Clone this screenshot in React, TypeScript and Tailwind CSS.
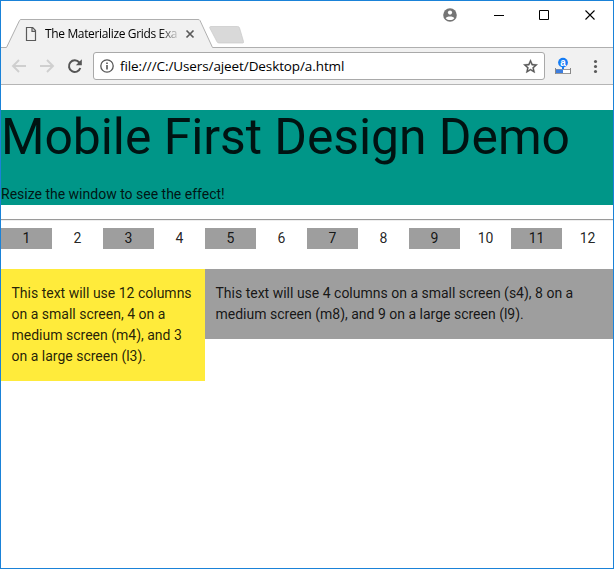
import React from "react";

const numbers = [1, 2, 3, 4, 5, 6, 7, 8, 9, 10, 11, 12];

function TabStrip() {
  return (
    <div className="relative flex h-[47px] items-start bg-white">
      <svg className="absolute left-0 top-0" width="612" height="47" fill="none">
        <path d="M0 46.5H5.5L18.5 19.5Q19 18.5 20 18.5H198L211.5 46.5H612V47H0Z" fill="#f1f1f1" />
        <path d="M0 46.5H5.5L18.5 19.5Q19 18.5 20 18.5H197Q198.500 18.5 199 19.500L211.5 46.5H612" stroke="#afafaf" />
        <path d="M209.500 25.500H236.500Q238 25.500 238.500 26.800L242.500 40.500Q243 42 241.500 42H218Q216.500 42 216 40.800L208.800 27Q208.400 25.500 209.500 25.500Z" fill="#d9d9d9" stroke="#c8c8c8" strokeWidth=".7" />
        <path d="M25.500 26.500H31.700L34.500 29.500V39.500H25.500Z M31 26.500V30.300H34.500" stroke="#5a5a5a" strokeWidth="1.2" />
        <path d="M185.500 29.500L192.500 36.500M192.500 29.500L185.500 36.500" stroke="#5a5a5a" strokeWidth="1.7" />
        <circle cx="449" cy="14" r="6.800" fill="#757575" />
        <circle cx="449" cy="11.600" r="2.100" fill="white" />
        <path d="M444.700 17.200C445.500 14.800 452.500 14.800 453.300 17.200C451.500 19.700 446.500 19.700 444.700 17.200Z" fill="white" />
        <path d="M493 14.500H503M538.500 9.500H547.500V18.500H538.500Z" stroke="#000" />
        <path d="M584.500 9.500L593.500 18.500M593.500 9.500L584.500 18.500" stroke="#000" strokeWidth="1.100" />
      </svg>
      <div className="relative ml-[44px] mt-[25px] w-[134px] whitespace-nowrap font-['Open_Sans',sans-serif] text-[12px] leading-4 tracking-[-0.35px] text-black [mask-image:linear-gradient(to_right,black_114px,transparent_136px)]">
        The Materialize Grids Exa
      </div>
    </div>
  );
}

function Toolbar() {
  return (
    <div className="flex h-[37px] items-center border-b border-[#b5b5b5] bg-[#f1f1f1]">
      <svg width="92" height="36" viewBox="1 48 92 36" fill="none" className="shrink-0">
        <path d="M26 66H13.500M19 60L13 66L19 72" stroke="#cfcfcf" strokeWidth="1.900" />
        <path d="M40 66H52.500M47 60L53 66L47 72" stroke="#cfcfcf" strokeWidth="1.900" />
        <path d="M79.300 62.500A5.800 5.800 0 1 0 80.300 68" stroke="#555" strokeWidth="2" />
        <path d="M81.800 59.300V65.200H75.900Z" fill="#555" />
      </svg>
      <div className="flex h-7 w-[452px] shrink-0 items-center rounded-[3px] border border-[#a9a9a9] bg-white pl-[6px] pr-[5px]">
        <svg width="14" height="14" fill="none" className="shrink-0">
          <circle cx="7" cy="7" r="6.200" stroke="#555" strokeWidth="1.300" />
          <path d="M7 6V10.500M7 3.500V5" stroke="#555" strokeWidth="1.600" />
        </svg>
        <span className="ml-[6px] flex-1 whitespace-nowrap font-['Open_Sans',sans-serif] text-[13.5px] leading-5 tracking-[-0.1px] text-black">
          file:///C:/Users/ajeet/Desktop/a.html
        </span>
        <svg width="17" height="17" viewBox="0 0 24 24" className="shrink-0">
          <path fill="#555" stroke="#555" strokeWidth=".5" d="M22 9.240l-7.190-.62L12 2 9.190 8.630 2 9.240l5.460 4.730L5.820 21 12 17.270 18.180 21l-1.630-7.030L22 9.240zM12 15.400l-3.760 2.270 1-4.280-3.320-2.880 4.380-.38L12 6.100l1.710 4.040 4.380.38-3.320 2.880 1 4.280L12 15.400z" />
        </svg>
      </div>
      <svg width="67" height="36" viewBox="545 48 67 36" className="shrink-0">
        <circle cx="563" cy="62.600" r="4.900" fill="#147cf5" />
        <text x="563" y="65.500" textAnchor="middle" fill="white" className="font-['Liberation_Sans',sans-serif] text-[10px] font-bold">a</text>
        <path d="M563 67V69" stroke="#147cf5" strokeWidth="2" />
        <path d="M555.500 69.500H570.500V73.500H555.500Z" fill="white" stroke="#999" />
        <path d="M556 69.500H563V73H556Z" fill="#3c7ee0" />
        <path d="M555.500 68V74M570.500 68V74" stroke="#888" />
        <circle cx="595.500" cy="61.500" r="1.550" fill="#5a5a5a" />
        <circle cx="595.500" cy="66.500" r="1.550" fill="#5a5a5a" />
        <circle cx="595.500" cy="71.500" r="1.550" fill="#5a5a5a" />
      </svg>
    </div>
  );
}

export default function App() {
  return (
    <div className="h-[569px] w-[614px] overflow-hidden border border-[#1a82d8] bg-white">
      <TabStrip />
      <Toolbar />
      <main className="pt-[25px] font-[Roboto,sans-serif] text-[14px] leading-[21px] text-black/87">
        <header className="h-[95px] bg-[#009688]">
          <h1 className="whitespace-nowrap text-[49.84px] leading-[54.8px] tracking-[-0.04px]">Mobile First Design Demo</h1>
          <p className="mt-[19px]">Resize the window to see the effect!</p>
        </header>
        <hr className="mt-[14px] h-[2px] border-b border-t border-b-[#eeeeee] border-t-[#9a9a9a]" />
        <div className="mt-[7px] grid grid-cols-12">
          {numbers.map((n) => (
            <div key={n} className={n % 2 ? "bg-[#9e9e9e] text-center" : "text-center"}>{n}</div>
          ))}
        </div>
        <div className="mt-5 flex items-start">
          <p className="w-1/3 bg-[#ffeb3b] px-[10.5px] py-[14px]">
            This text will use 12 columns<br />on a small screen, 4 on a<br />medium screen (m4), and 3<br />on a large screen (l3).
          </p>
          <p className="w-2/3 bg-[#9e9e9e] px-[10.5px] py-[14px]">
            This text will use 4 columns on a small screen (s4), 8 on a<br />medium screen (m8), and 9 on a large screen (l9).
          </p>
        </div>
      </main>
    </div>
  );
}
